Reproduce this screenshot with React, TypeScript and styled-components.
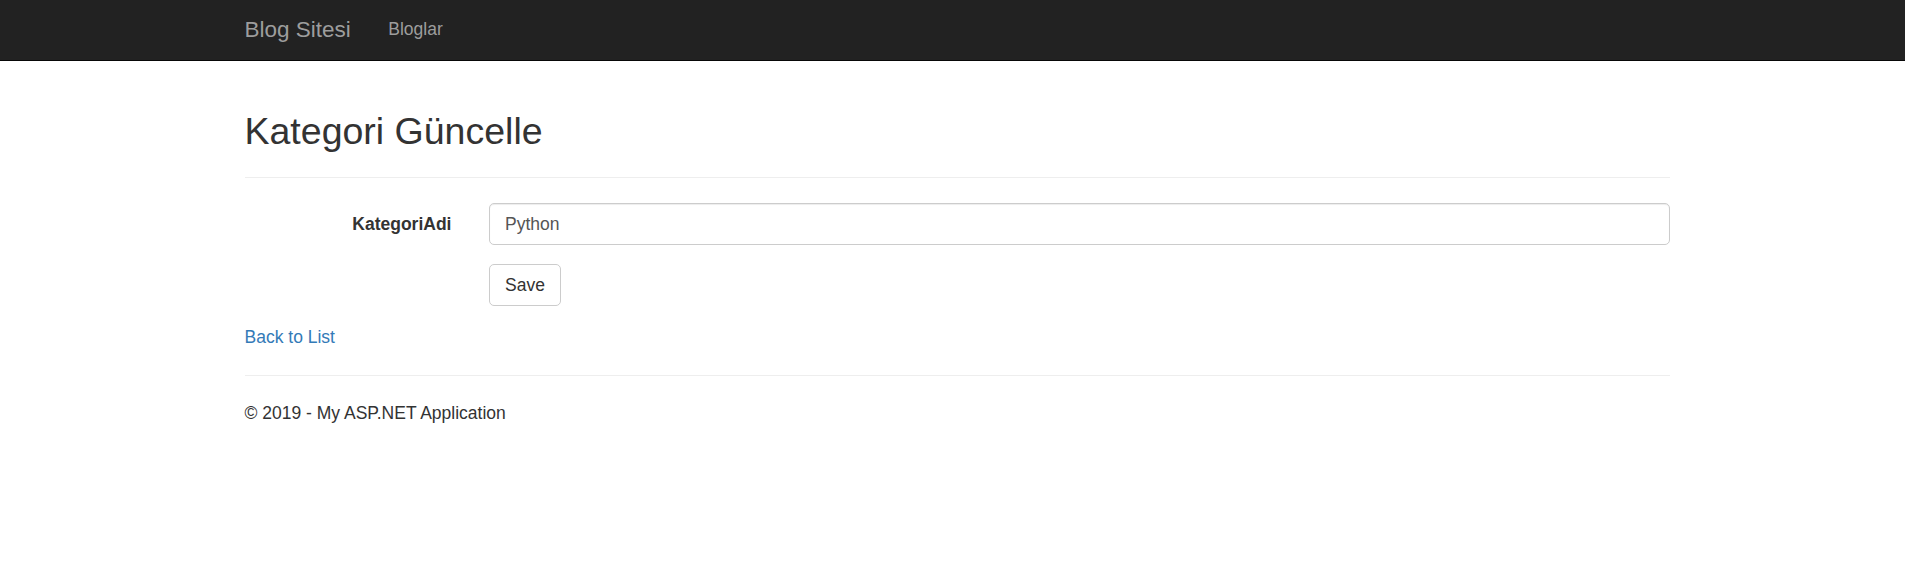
import styled, { createGlobalStyle } from 'styled-components';

const GlobalStyle = createGlobalStyle`
  * {
    box-sizing: border-box;
  }
  html, body {
    margin: 0;
    padding: 0;
    background: #fff;
  }
  body {
    font-family: "Liberation Sans", Arial, Helvetica, sans-serif;
    font-size: 17.5px;
    line-height: 25px;
    color: #333;
  }
`;

const Navbar = styled.nav`
  height: 61px;
  background: #222;
  border-bottom: 1px solid #080808;
`;

const Container = styled.div`
  width: 1425px;
  margin-left: calc(50% - 708px);
`;

const NavInner = styled(Container)`
  display: flex;
  align-items: flex-start;
  padding-top: 16.5px;
`;

const Brand = styled.a`
  font-size: 22.5px;
  line-height: 25px;
  color: #9d9d9d;
  text-decoration: none;
  margin-right: 37.5px;
`;

const NavLink = styled.a`
  font-size: 17.5px;
  line-height: 25px;
  color: #9d9d9d;
  text-decoration: none;
`;

const Title = styled.h2`
  font-size: 37.5px;
  line-height: 41.25px;
  font-weight: 500;
  margin: 49.75px 0 0;
  color: #333;
`;

const Rule = styled.hr`
  border: 0;
  border-top: 1px solid #eee;
  margin: 25px 0;
  height: 0;
`;

const Form = styled.form`
  margin: 0;
`;

const FormGroup = styled.div`
  display: grid;
  grid-template-columns: 207px 1fr;
  column-gap: 37.5px;
  margin-bottom: 18.75px;
`;

const Label = styled.label`
  font-weight: 700;
  text-align: right;
  padding-top: 8.75px;
`;

const Input = styled.input`
  grid-column: 2;
  display: block;
  width: 100%;
  height: 42px;
  padding: 7.5px 15px;
  font-family: inherit;
  font-size: 17.5px;
  line-height: 25px;
  color: #555;
  background: #fff;
  border: 1px solid #ccc;
  border-radius: 5px;
  box-shadow: inset 0 1px 1px rgba(0, 0, 0, 0.075);
  outline: none;
`;

const Button = styled.button`
  grid-column: 2;
  justify-self: start;
  height: 42.5px;
  padding: 7.5px 15px;
  font-family: inherit;
  font-size: 17.5px;
  line-height: 25px;
  color: #333;
  background: #fff;
  border: 1px solid #ccc;
  border-radius: 5px;
  cursor: pointer;
`;

const BackLink = styled.a`
  color: #337ab7;
  text-decoration: none;
`;

const Footer = styled.footer`
  p {
    margin: 0 0 12.5px;
  }
`;

export default function App() {
  return (
    <>
      <GlobalStyle />
      <Navbar>
        <NavInner>
          <Brand href="#">Blog Sitesi</Brand>
          <NavLink href="#">Bloglar</NavLink>
        </NavInner>
      </Navbar>
      <Container>
        <Title>Kategori Güncelle</Title>
        <Rule />
        <Form onSubmit={(e) => e.preventDefault()}>
          <FormGroup>
            <Label htmlFor="KategoriAdi">KategoriAdi</Label>
            <Input id="KategoriAdi" defaultValue="Python" />
          </FormGroup>
          <FormGroup>
            <Button type="submit">Save</Button>
          </FormGroup>
        </Form>
        <div>
          <BackLink href="#">Back to List</BackLink>
        </div>
        <Rule />
        <Footer>
          <p>© 2019 - My ASP.NET Application</p>
        </Footer>
      </Container>
    </>
  );
}
